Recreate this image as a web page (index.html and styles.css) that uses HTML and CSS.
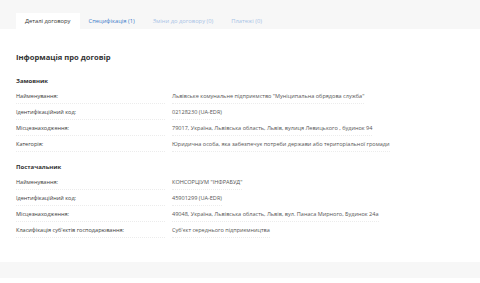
FILE: index.html
```html
<!DOCTYPE html>
<html>
  <head>
    <meta charset="UTF-8">
    <title>Інформація про договір</title>
    <meta name="viewport" content="width=device-width, initial-scale=1.0">
    <link rel="stylesheet" href="styles.css">
  </head>
  <body>
    <nav class="tabs">
      <a class="tab tab-active">Деталі договору</a>
      <a class="tab">Специфікація (1)</a>
      <a class="tab tab-muted">Зміни до договору (0)</a>
      <a class="tab tab-muted">Платежі (0)</a>
    </nav>
    <main class="details">
      <h1 class="details-title">Інформація про договір</h1>

      <h2 class="section-title">Замовник</h2>
      <div class="info-row">
        <span class="info-label">Найменування:</span>
        <span class="info-value">Львівське комунальне підприємство "Муніципальна обрядова служба"</span>
      </div>
      <div class="info-row">
        <span class="info-label">Ідентифікаційний код:</span>
        <span class="info-value">02128230 (UA-EDR)</span>
      </div>
      <div class="info-row">
        <span class="info-label">Місцезнаходження:</span>
        <span class="info-value">79017, Україна, Львівська область, Львів, вулиця Левицького , будинок 94</span>
      </div>
      <div class="info-row">
        <span class="info-label">Категорія:</span>
        <span class="info-value">Юридична особа, яка забезпечує потреби держави або територіальної громади</span>
      </div>

      <h2 class="section-title section-gap">Постачальник</h2>
      <div class="info-row">
        <span class="info-label">Найменування:</span>
        <span class="info-value">КОНСОРЦІУМ "ІНФРАБУД"</span>
      </div>
      <div class="info-row">
        <span class="info-label">Ідентифікаційний код:</span>
        <span class="info-value">45901299 (UA-EDR)</span>
      </div>
      <div class="info-row">
        <span class="info-label">Місцезнаходження:</span>
        <span class="info-value">49048, Україна, Львівська область, Львів, вул. Панаса Мирного, Будинок 24а</span>
      </div>
      <div class="info-row">
        <span class="info-label">Класифікація суб'єктів господарювання:</span>
        <span class="info-value">Суб'єкт середнього підприємництва</span>
      </div>
    </main>
    <footer class="page-footer"></footer>
  </body>
</html>
```

FILE: styles.css
```css
body {
    margin: 0;
    font-family: "Open Sans", "Noto Sans", sans-serif;
    background-color: #fff;
    color: #333;
}

.tabs {
    display: flex;
    height: 16px;
    padding: 13px 16px 0;
    background-color: #f7f7f7;
    border-top: 2px solid #efefef;
    margin-top: -2px;
}

.tab {
    padding: 0 9px;
    font-size: 5.8px;
    line-height: 16px;
    color: #3d7cc9;
    white-space: nowrap;
}

.tab-active {
    background-color: #fff;
    color: #333;
}

.tab-muted {
    color: #a8c3e6;
}

.details {
    padding: 23px 16px 24px;
}

.details-title {
    margin: 0;
    font-size: 7.6px;
    line-height: 10px;
    font-weight: 700;
    color: #333;
}

.section-title {
    margin: 14px 0 2px;
    font-size: 6px;
    line-height: 10px;
    font-weight: 700;
    color: #333;
}

.section-gap {
    margin-top: 10px;
}

.info-row {
    display: grid;
    grid-template-columns: 149px 1fr;
    column-gap: 7px;
    align-items: end;
    padding-top: 4px;
}

.info-label,
.info-value {
    font-size: 5.55px;
    line-height: 8px;
    padding-bottom: 3px;
    border-bottom: 1px dotted #ececec;
    white-space: nowrap;
}

.info-label {
    color: #3a3a3a;
}

.info-value {
    justify-self: start;
    color: #555;
}

.page-footer {
    height: 16px;
    background-color: #f7f7f7;
}
```
